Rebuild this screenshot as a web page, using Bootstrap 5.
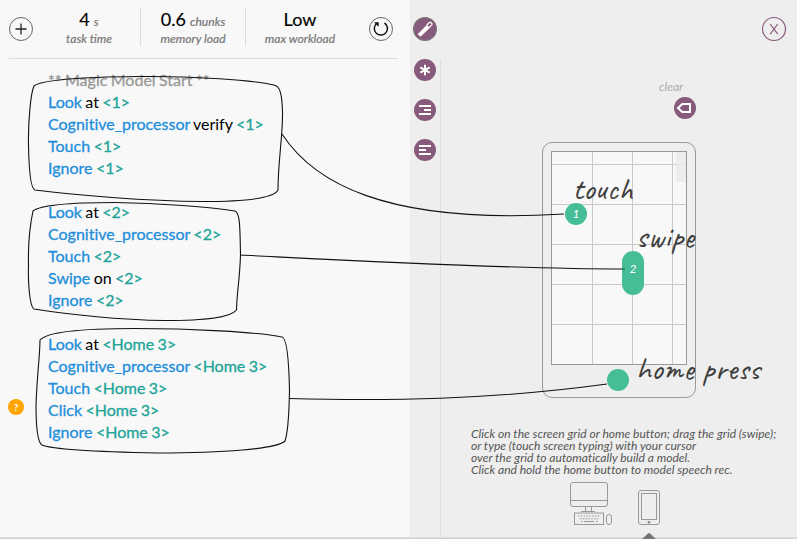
<!DOCTYPE html>
<html lang="en">
<head>
<meta charset="utf-8">
<meta name="viewport" content="width=device-width, initial-scale=1">
<title>Task model editor</title>
<link href="https://cdn.jsdelivr.net/npm/bootstrap@5.3.0/dist/css/bootstrap.min.css" rel="stylesheet">
<style>
body{font-family:Lato,sans-serif;background:#f8f8f8;color:#000}
.app{width:797px;height:539px}
.model{width:410px;padding:0 12px 0 9px}
.topbar{height:59px;border-bottom:1px solid #dcdcdc}
.ring{width:24px;height:24px;flex:none}
.metrics{width:319px;margin-left:5px}
.metric{height:38px;line-height:18px;text-align:center;border-right:1px solid #dcdcdc}
.metric:last-child{border:0}
.metric b{font-weight:400;font-size:18px;-webkit-text-stroke:.15px #000}
.metric i{font-size:12.1px;color:#777;-webkit-text-stroke:.2px #777}
.metric>div{height:18px;line-height:23px;white-space:nowrap}
.metric>div+div{line-height:22px}
.code{padding-left:39px;padding-top:10px;font-size:16px;line-height:22px;word-spacing:-.7px;white-space:nowrap;font-variant-ligatures:none}
.code>div{height:22px}
.cmd{color:#1e8edb;-webkit-text-stroke:.3px #1e8edb}
.tgt{color:#21a498;-webkit-text-stroke:.3px #21a498}
.note{color:#999;-webkit-text-stroke:.3px #999}
.side{width:387px;background:#eee}
.tools{width:30px;padding-top:16px}
.tools svg{display:block;flex:none}
.work{width:357px}
.worktop{height:59px;padding:16px 10px 0 0}
.bench{height:480px;border-left:1px solid #dcdcdc}
.clearbox{padding:21px 0 0 218px;height:83px}
.clearbox i{display:block;font-size:12px;line-height:14px;color:#aaa}
.clearbox svg{display:block;margin:3px 0 0 15px}
.phone{width:154px;height:256px;margin-left:101px;border:1px solid #999;border-radius:10px;padding:8px}
.pane{display:block}
.hint{margin:30px 0 0 30px;font-size:12.05px;line-height:12px;font-style:italic;color:#555;white-space:nowrap;font-variant-ligatures:none}
.devices{margin:5px 0 0 128px}
.devices svg{display:block}
.overlay{left:0;top:0;pointer-events:none}
.hand{font-family:Caveat,"Segoe Print",cursive;font-size:32px;fill:#3d3d3d}
</style>
<script src="https://cdn.jsdelivr.net/npm/bootstrap@5.3.0/dist/js/bootstrap.bundle.min.js"></script>
</head>
<body class="overflow-hidden">
<main class="app d-flex position-relative overflow-hidden">
  <section class="model">
    <header class="topbar d-flex align-items-center">
      <svg class="ring" viewBox="0 0 24 24" fill="none" stroke="#666"><circle cx="12" cy="12" r="11.5"/><path d="M12 6.5v11M6.5 12h11" stroke="#222" stroke-width="1.3"/></svg>
      <div class="metrics d-flex mb-1">
        <div class="metric" style="width:103px"><div><b>4</b> <i>s</i></div><div><i>task time</i></div></div>
        <div class="metric" style="width:105px"><div><b>0.6</b> <i>chunks</i></div><div><i>memory load</i></div></div>
        <div class="metric" style="width:108px"><div><b>Low</b></div><div><i>max workload</i></div></div>
      </div>
      <svg class="ring ms-auto" style="margin-right:5px" viewBox="0 0 24 24" fill="none" stroke="#666"><circle cx="12" cy="12" r="11.5"/><path d="M15.500 6A6.600 6.600 0 1 1 7.600 6.500" stroke="#111" stroke-width="1.500"/><path d="M5 5.200h4.700v4.600z" fill="#111" stroke="none"/></svg>
    </header>
    <div class="code">
      <div class="note">** Magic Model Start **</div>
      <div><span class="cmd">Look</span> at <span class="tgt">&lt;1&gt;</span></div>
      <div><span class="cmd">Cognitive_processor</span> verify <span class="tgt">&lt;1&gt;</span></div>
      <div><span class="cmd">Touch</span> <span class="tgt">&lt;1&gt;</span></div>
      <div><span class="cmd">Ignore</span> <span class="tgt">&lt;1&gt;</span></div>
      <div></div>
      <div><span class="cmd">Look</span> at <span class="tgt">&lt;2&gt;</span></div>
      <div><span class="cmd">Cognitive_processor</span> <span class="tgt">&lt;2&gt;</span></div>
      <div><span class="cmd">Touch</span> <span class="tgt">&lt;2&gt;</span></div>
      <div><span class="cmd">Swipe</span> on <span class="tgt">&lt;2&gt;</span></div>
      <div><span class="cmd">Ignore</span> <span class="tgt">&lt;2&gt;</span></div>
      <div></div>
      <div><span class="cmd">Look</span> at <span class="tgt">&lt;Home 3&gt;</span></div>
      <div><span class="cmd">Cognitive_processor</span> <span class="tgt">&lt;Home 3&gt;</span></div>
      <div><span class="cmd">Touch</span> <span class="tgt">&lt;Home 3&gt;</span></div>
      <div><span class="cmd">Click</span> <span class="tgt">&lt;Home 3&gt;</span></div>
      <div><span class="cmd">Ignore</span> <span class="tgt">&lt;Home 3&gt;</span></div>
    </div>
  </section>
  <section class="side d-flex">
    <nav class="tools d-flex flex-column align-items-center">
      <svg width="26" height="26" viewBox="0 0 26 26"><circle cx="13" cy="13" r="11.400" fill="#875a7c" stroke="#777" stroke-width="1.200"/><path d="M5.600 18.200 15 8.800l2.900 2.900-9.400 9.100z" fill="#fff"/><path d="m14.800 9 2.600-2.500q.8-.6 1.400 0l1 1q.6.7 0 1.400l-2.600 2.600" fill="none" stroke="#fff" stroke-width="1.200"/></svg>
      <svg class="mt-3" width="24" height="24" viewBox="0 0 24 24"><circle cx="12" cy="12" r="11" fill="#875a7c"/><path d="M12 6.800v10.400M7.300 9.400l9.400 5.200M7.300 14.600l9.400-5.200" stroke="#fff" stroke-width="2"/></svg>
      <svg class="mt-3" width="24" height="24" viewBox="0 0 24 24"><circle cx="12" cy="12" r="11" fill="#875a7c"/><path d="M6 8h12M11 12h7M6 16h12" stroke="#fff" stroke-width="2"/></svg>
      <svg class="mt-3" width="24" height="24" viewBox="0 0 24 24"><circle cx="12" cy="12" r="11" fill="#875a7c"/><path d="M6 8h12M6 12h7M6 16h12" stroke="#fff" stroke-width="2"/></svg>
    </nav>
    <div class="work">
      <div class="worktop d-flex justify-content-end">
        <svg width="26" height="26" viewBox="0 0 26 26" fill="none" stroke="#875a7c"><circle cx="13" cy="13" r="11.500" stroke-width="1.200"/><path d="m9.200 8 7.600 10.200M16.800 8 9.200 18.200" stroke-width="1.200"/></svg>
      </div>
      <div class="bench">
        <div class="clearbox"><i>clear</i><svg width="22" height="22" viewBox="0 0 22 22"><circle cx="11" cy="11" r="11" fill="#875a7c"/><path d="M4 11 8.300 7H16v8H8.300z" fill="none" stroke="#fff" stroke-width="2"/></svg></div>
        <div class="phone">
          <svg class="pane" width="136" height="214"><rect width="136" height="214" fill="#f8f8f8"/><path d="M41.500 0v214M81.500 0v214M121.500 0v214M0 13.500h136M0 53.500h136M0 93.500h136M0 133.500h136M0 173.500h136" stroke="#c8c8c8"/><path d="M125 1h10v30h-10z" fill="#eaeaea" fill-opacity=".8"/><rect x=".5" y=".5" width="135" height="213" fill="none" stroke="#999"/></svg>
        </div>
        <div class="hint">Click on the screen grid or home button; drag the grid (swipe);<br>or type (touch screen typing) with your cursor<br>over the grid to automatically build a model.<br>Click and hold the home button to model speech rec.</div>
        <div class="devices">
          <svg width="92" height="46" viewBox="569 481 92 46" fill="none" stroke="#999">
            <rect x="570.500" y="482.500" width="37" height="24" rx="2.500"/><path d="M571 500.500h36M585.500 507v4M591.500 507v4M581 511.500h14"/><rect x="574.500" y="513" width="29" height="11.500"/><path d="M578 516h22M580 518.800h19" stroke-dasharray="1.500 1.300"/><path d="M584 521.500h10M581 521.500h1.500M596 521.500h1.500"/><rect x="606.500" y="514.500" width="5" height="10" rx="2.500"/>
            <rect x="638.500" y="490.500" width="21" height="34" rx="2.500"/><rect x="641.500" y="493.500" width="15" height="26"/><circle cx="649" cy="522.200" r="1.300" fill="#888" stroke="none"/>
          </svg>
        </div>
      </div>
    </div>
  </section>
  <!-- Callouts drawn over both panels -->
  <svg class="overlay position-absolute" width="797" height="539" fill="none">
    <path d="M0 537.500h797" stroke="#dedede"/><path d="M0 538.500h797" stroke="#cfcfcf"/>
    <path d="m642 539 6-5.500q1-.9 2 0l6 5.500z" fill="#757575"/>
    <g stroke="#111" stroke-width="1.100">
      <path d="M34 86C42 80 82 77 138 76.500C194 76 253 80 274 85C280 86 282 94 282.500 112C283 135 278 161 278 190C274 198 246 201.500 202 201.500C145 201 75 195 35 190C31 189 29 174 28.500 145C28 120 31 92 34 86Z"/>
      <path d="M33 211C42 204 75 202.500 115 202.500C160 203 210 207 235 211C240 213 240 227 240.500 254C240 278 237 290 236.500 310C230 318 205 320.500 165 320.500C120 320 65 314 34 309C29 306 28 278 28.500 265C28 244 30 225 33 211Z"/>
      <path d="M40 340C47 332 81 328.500 135 328.500C191 328.500 257 332 282 337C287 338 289 365 289.500 391C289 407 289 429 285 441C277 449 222 453 158 453C106 452 54 450 42 445C37 442 36 423 36 405C37 375 40 355 40 340Z"/>
      <path d="M282 134C312 180 381 225 564 214M240 255C340 260 500 269 625 269M289 398.500C386 401 490 400 607 384"/>
    </g>
    <g fill="#45bd97"><circle cx="576" cy="214" r="11"/><rect x="622" y="251" width="22" height="44" rx="11"/><circle cx="618" cy="380" r="11"/></g>
    <path d="M622 269h3" stroke="#154b3b"/>
    <g fill="#fff" font-size="12" font-style="italic" text-anchor="middle"><text x="576" y="218">1</text><text x="633" y="273">2</text></g>
    <g class="hand">
      <text x="572.500" y="199" textLength="60">touch</text>
      <text x="636" y="247" textLength="58">swipe</text>
      <text x="636" y="379" textLength="124">home press</text>
    </g>
    <circle cx="16" cy="407" r="8" fill="#ffa500"/><text x="16" y="410.500" fill="#fff" font-size="10" font-weight="700" text-anchor="middle">?</text>
  </svg>
</main>
</body>
</html>
